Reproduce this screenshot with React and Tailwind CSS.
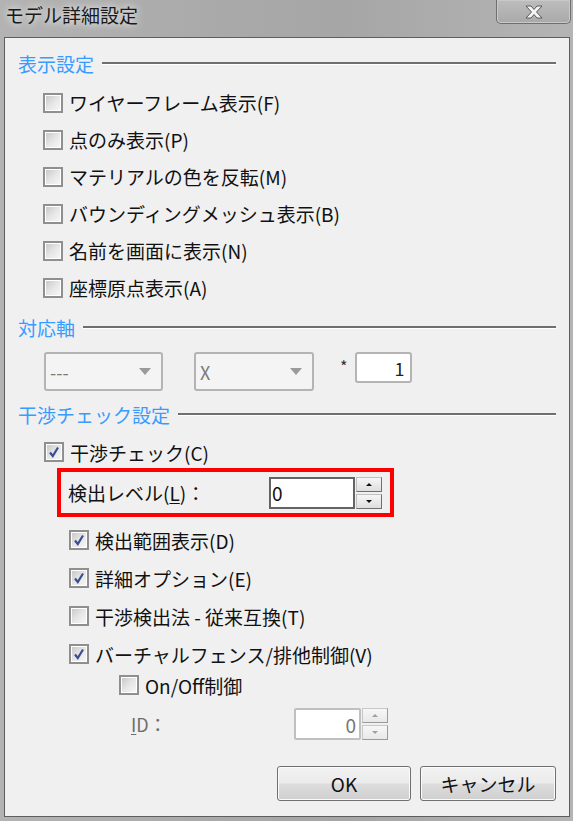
import React from 'react';

const font = "font-['Noto_Sans_CJK_JP','Liberation_Sans',sans-serif]";

function Box({ checked, disabled }) {
    return (
        <span className="w-[20px] h-[20px] border-2 border-[#8f8f8f] bg-white flex items-center justify-center shrink-0">
            <span className="w-[14px] h-[14px] bg-[linear-gradient(135deg,#c9c9c9,#e6e6e6_50%,#f6f6f6)] flex items-center justify-center">
                {checked && (
                    <svg width="12" height="12" viewBox="0 0 12 12">
                        <path d="M2 6.5 L4.8 10 L10 1.5" fill="none" stroke={disabled ? '#8a8a8a' : '#3b4f8f'} strokeWidth="2.2" />
                    </svg>
                )}
            </span>
        </span>
    );
}

function Check({ label, checked, className = 'h-[37px]' }) {
    return (
        <div className={`flex items-center gap-[6px] ${className}`}>
            <Box checked={checked} />
            <span className="text-[19px] leading-none text-[#111]">{label}</span>
        </div>
    );
}

function GroupHeader({ title }) {
    return (
        <div className="flex items-center gap-[8px] h-[26px] pl-[13px] pr-[13px]">
            <span className="text-[19px] leading-none text-[#3a9bff]">{title}</span>
            <div className="flex-1 flex flex-col">
                <div className="h-[2px] bg-[#6f6f6f]" />
                <div className="h-[1px] bg-white" />
            </div>
        </div>
    );
}

function Arrow({ down, color }) {
    return (
        <svg width="8" height="5" viewBox="0 0 8 5">
            <path d={down ? 'M1 1 H7 L4 4 Z' : 'M1 4 H7 L4 1 Z'} fill={color} />
        </svg>
    );
}

function Spin({ disabled }) {
    const btn = disabled
        ? 'bg-[linear-gradient(#f7f7f7,#e8e8e8)] border border-[#c8c8c8] border-r-[#9a9a9a] border-b-[#9a9a9a]'
        : 'bg-[linear-gradient(#f6f6f6,#dedede)] border border-[#c0c0c0] border-r-[#6f6f6f] border-b-[#6f6f6f]';
    const col = disabled ? '#a0a0a0' : '#111';
    return (
        <div className="flex flex-col justify-between h-[32px] w-[26px] ml-[1px]">
            <div className={`h-[15px] flex items-center justify-center ${btn}`}>
                <Arrow color={col} />
            </div>
            <div className={`h-[15px] flex items-center justify-center ${btn}`}>
                <Arrow down color={col} />
            </div>
        </div>
    );
}

function Combo({ value, width }) {
    return (
        <div className={`${width} h-[39px] border-2 border-[#b4b4b4] rounded-[3px] bg-[#f4f4f4] flex items-center justify-between pl-[4px] pr-[10px]`}>
            <span className="text-[18px] leading-none text-[#7a7a7a]">{value}</span>
            <svg width="12" height="7" viewBox="0 0 12 7">
                <path d="M0 0 H12 L6 7 Z" fill="#9a9a9a" />
            </svg>
        </div>
    );
}

function Button({ label, width }) {
    return (
        <div className={`${width} h-[35px] rounded-[3px] border border-[#707070] shadow-[inset_0_0_0_1px_#fbfbfb] bg-[linear-gradient(#f2f2f2,#ebebeb_48%,#dddddd_52%,#cfcfcf)] flex items-center justify-center text-[19px] leading-none text-[#111]`}>
            {label}
        </div>
    );
}

export default function App() {
    return (
        <div className={`w-[573px] h-[821px] flex flex-col bg-[linear-gradient(90deg,#b3b3b3,#a9a9a9_40%,#a6a6a6_60%,#b4b4b4)] ${font}`}>
            {/* Title bar */}
            <div className="h-[37px] flex items-start justify-between shrink-0">
                <span className="ml-[5px] mt-[5px] text-[19px] leading-none text-[#1a1a1a] [text-shadow:0_0_6px_#e8e8e8,0_0_10px_#dcdcdc]">
                    モデル詳細設定
                </span>
                <div className="w-[75px] h-[24px] mr-[2px] border border-t-0 border-[#6f6f6f] rounded-b-[5px] shadow-[inset_0_0_0_1px_#c9c9c9] bg-[linear-gradient(#bdbdbd,#a9a9a9)] flex items-center justify-center">
                    <svg width="18" height="14" viewBox="0 0 18 14">
                        <path d="M1 1 H6 L9 4.5 L12 1 H17 L11.5 7 L17 13 H12 L9 9.5 L6 13 H1 L6.5 7 Z" fill="#f4f4f4" stroke="#5a5a5a" strokeWidth="1" />
                    </svg>
                </div>
            </div>

            {/* Content */}
            <div className="flex-1 ml-[4px] mr-[3px] mb-[4px] border border-[#5e5e5e] bg-[#f0f0f0] flex flex-col pt-[12px]">
                <GroupHeader title="表示設定" />
                <div className="mt-[8px] pl-[38px] flex flex-col">
                    <Check label="ワイヤーフレーム表示(F)" />
                    <Check label="点のみ表示(P)" />
                    <Check label="マテリアルの色を反転(M)" />
                    <Check label="バウンディングメッシュ表示(B)" />
                    <Check label="名前を画面に表示(N)" />
                    <Check label="座標原点表示(A)" />
                </div>

                <div className="mt-[8px]">
                    <GroupHeader title="対応軸" />
                </div>
                <div className="mt-[12px] pl-[39px] flex items-start">
                    <Combo value="---" width="w-[119px]" />
                    <div className="ml-[31px]">
                        <Combo value="X" width="w-[120px]" />
                    </div>
                    <span className="ml-[26px] mt-[6px] text-[16px] leading-none text-[#333]">*</span>
                    <div className="ml-[8px] w-[57px] h-[31px] border-2 border-[#b4b4b4] rounded-[3px] bg-white flex items-center justify-end pr-[6px] text-[18px] leading-none text-[#222]">
                        1
                    </div>
                </div>

                <div className="mt-[10px]">
                    <GroupHeader title="干渉チェック設定" />
                </div>
                <div className="mt-[9px] pl-[39px]">
                    <Check label="干渉チェック(C)" checked className="h-[32px]" />
                </div>
                <div className="ml-[52px] w-[337px] h-[49px] border-4 border-[#ff0000] flex items-center pl-[7px]">
                    <span className="w-[201px] text-[19px] leading-none text-[#111]">
                        検出レベル(<span className="underline underline-offset-2">L</span>)：
                    </span>
                    <div className="w-[86px] h-[32px] border-2 border-[#646464] bg-white flex items-center pl-[1px] text-[19px] leading-none text-[#111]">
                        0
                    </div>
                    <Spin />
                </div>
                <div className="mt-[4px] pl-[64px] flex flex-col">
                    <Check label="検出範囲表示(D)" checked className="h-[38px]" />
                    <Check label="詳細オプション(E)" checked className="h-[38px]" />
                    <Check label="干渉検出法 - 従来互換(T)" className="h-[38px]" />
                    <Check label="バーチャルフェンス/排他制御(V)" checked className="h-[38px]" />
                </div>
                <div className="pl-[114px]">
                    <Check label="On/Off制御" className="h-[24px]" />
                </div>
                <div className="mt-[11px] pl-[126px] flex items-center">
                    <span className="w-[163px] text-[18px] leading-none text-[#6d6d6d]">
                        <span className="underline underline-offset-2">I</span>D：
                    </span>
                    <div className="w-[67px] h-[32px] border-2 border-[#c0c0c0] rounded-[2px] bg-white flex items-center justify-end pr-[3px] text-[19px] leading-none text-[#777]">
                        0
                    </div>
                    <Spin disabled />
                </div>
                <div className="mt-[26px] pr-[13px] flex justify-end gap-[9px]">
                    <Button label="OK" width="w-[134px]" />
                    <Button label="キャンセル" width="w-[136px]" />
                </div>
            </div>
        </div>
    );
}
